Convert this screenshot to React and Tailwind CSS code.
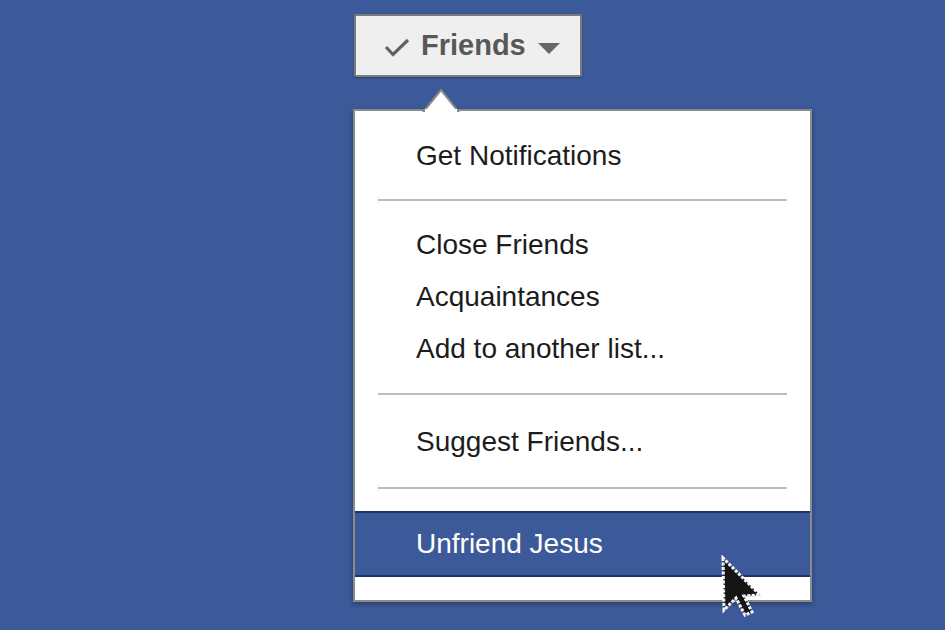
import React from 'react';

function Cursor() {
  return (
    <svg width="46" height="66" viewBox="0 0 46 66" className="absolute left-[720px] top-[555px]">
      <polygon
        points="3,3 4,55 16,43 25,60 32,57 24,41 40,40"
        fill="#151515"
        stroke="#ffffff"
        strokeWidth="3"
        strokeLinejoin="miter"
        strokeDasharray="3 1.5"
      />
      <polygon
        points="3,3 4,55 16,43 25,60 32,57 24,41 40,40"
        fill="none"
        stroke="#9a9a9a"
        strokeWidth="0.6"
        transform="translate(0.6 0.6)"
        opacity="0.5"
      />
    </svg>
  );
}

const Separator = ({ top, bottom }) => (
  <div className={`mx-[23px] h-[2px] bg-[#bdbdbd] ${top} ${bottom}`} />
);

const Item = ({ children }) => (
  <div className="h-[52px] leading-[52px] pl-[61px] text-[28px] text-[#1c1c1c]">{children}</div>
);

export default function App() {
  return (
    <div className="relative w-[945px] h-[630px] overflow-hidden bg-[#3c5a99] pl-[353px] pt-[14px]" style={{ fontFamily: '"Liberation Sans", Arial, sans-serif' }}>
      {/* Friends button */}
      <button className="ml-[1px] flex items-center pl-[28px] w-[228px] h-[63px] border-2 border-[#7b7b7b] bg-[#efefef] rounded-[2px] shadow-[0_1px_2px_rgba(0,0,0,0.3)]">
        <svg width="26" height="19" viewBox="0 0 26 19" className="mt-[3px]">
          <path d="M2 9 L9 16.5 L24 2" fill="none" stroke="#626262" strokeWidth="3.2" />
        </svg>
        <span className="ml-[11px] text-[29px] font-bold text-[#585858] leading-none">Friends</span>
        <svg width="22" height="12" viewBox="0 0 22 12" className="ml-[12px] mt-[6px]">
          <polygon points="0,0 22,0 11,11" fill="#676767" />
        </svg>
      </button>

      {/* Dropdown */}
      <div className="relative mt-[32px] w-[459px] border-2 border-[#8a8a8a] bg-white shadow-[0_2px_5px_rgba(0,0,0,0.35)]">
        <svg width="38" height="24" viewBox="0 0 38 24" className="absolute left-[67px] top-[-23px]">
          <polygon points="2,23 19,2 36,23" fill="#ffffff" stroke="#8a8a8a" strokeWidth="2" />
          <rect x="3" y="21" width="32" height="3" fill="#ffffff" />
        </svg>
        <div className="pt-[19px]">
          <Item>Get Notifications</Item>
          <Separator top="mt-[17px]" bottom="mb-[18px]" />
          <Item>Close Friends</Item>
          <Item>Acquaintances</Item>
          <Item>Add to another list...</Item>
          <Separator top="mt-[18px]" bottom="mb-[21px]" />
          <Item>Suggest Friends...</Item>
          <Separator top="mt-[19px]" bottom="mb-[22px]" />
          <div className="h-[66px] border-y-2 border-[#1e3461] bg-[#3c5a99] pl-[61px] text-[28px] leading-[62px] text-white">
            Unfriend Jesus
          </div>
          <div className="h-[23px]" />
        </div>
      </div>

      <Cursor />
    </div>
  );
}
